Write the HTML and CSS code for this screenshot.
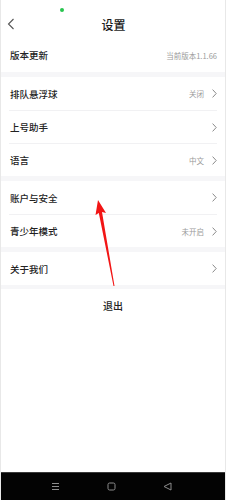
FILE: index.html
```html
<!DOCTYPE html>
<html lang="zh">
<head>
<meta charset="utf-8">
<title>设置</title>
<link rel="stylesheet" href="styles.css">
</head>
<body>
<div class="screen">
  <div class="top">
    <div class="status"><span class="dot"></span></div>
    <div class="titlebar">
      <svg class="back" width="8" height="12" viewBox="0 0 8 12"><path d="M6.5 1 L1.5 6 L6.5 11" fill="none" stroke="#555" stroke-width="1.1"/></svg>
      <div class="title">设置</div>
      <span></span>
    </div>
    <div class="row"><div class="row-body"><span class="label">版本更新</span><span class="value">当前版本1.1.66</span></div></div>
  </div>

  <div class="group">
    <div class="row"><div class="row-body"><span class="label">排队悬浮球</span><span class="right"><span class="value">关闭</span><svg class="chev" width="5" height="9" viewBox="0 0 5 9"><path d="M0.6 0.6 L4.2 4.5 L0.6 8.4" fill="none" stroke="#8a8a8a" stroke-width="1"/></svg></span></div></div>
    <div class="row"><div class="row-body"><span class="label">上号助手</span><span class="right"><svg class="chev" width="5" height="9" viewBox="0 0 5 9"><path d="M0.6 0.6 L4.2 4.5 L0.6 8.4" fill="none" stroke="#8a8a8a" stroke-width="1"/></svg></span></div></div>
    <div class="row"><div class="row-body"><span class="label">语言</span><span class="right"><span class="value">中文</span><svg class="chev" width="5" height="9" viewBox="0 0 5 9"><path d="M0.6 0.6 L4.2 4.5 L0.6 8.4" fill="none" stroke="#8a8a8a" stroke-width="1"/></svg></span></div></div>
  </div>

  <div class="group">
    <div class="row"><div class="row-body"><span class="label">账户与安全</span><span class="right"><svg class="chev" width="5" height="9" viewBox="0 0 5 9"><path d="M0.6 0.6 L4.2 4.5 L0.6 8.4" fill="none" stroke="#8a8a8a" stroke-width="1"/></svg></span></div></div>
    <div class="row"><div class="row-body"><span class="label">青少年模式</span><span class="right"><span class="value">未开启</span><svg class="chev" width="5" height="9" viewBox="0 0 5 9"><path d="M0.6 0.6 L4.2 4.5 L0.6 8.4" fill="none" stroke="#8a8a8a" stroke-width="1"/></svg></span></div></div>
  </div>

  <div class="group">
    <div class="row"><div class="row-body"><span class="label">关于我们</span><span class="right"><svg class="chev" width="5" height="9" viewBox="0 0 5 9"><path d="M0.6 0.6 L4.2 4.5 L0.6 8.4" fill="none" stroke="#8a8a8a" stroke-width="1"/></svg></span></div></div>
  </div>

  <div class="bottom">
    <div class="logout">退出</div>
  </div>

  <div class="navbar">
    <svg width="9" height="9" viewBox="0 0 9 9"><path d="M1 1.5 H8 M1 4.5 H8 M1 7.5 H8" stroke="#8c8c8c" stroke-width="1"/></svg>
    <svg width="9" height="9" viewBox="0 0 9 9"><rect x="1" y="1" width="7" height="7" rx="1.6" fill="none" stroke="#8c8c8c" stroke-width="1"/></svg>
    <svg width="9" height="9" viewBox="0 0 9 9"><path d="M1 4.5 L8 1 L8 8 Z" fill="none" stroke="#8c8c8c" stroke-width="1" stroke-linejoin="round"/></svg>
  </div>

  <svg class="arrow" width="226" height="500" viewBox="0 0 226 500">
    <polygon points="98,200 106,213 102,212 114.5,286 113.5,286 98.8,213 95.5,215" fill="#f21515"/>
  </svg>
</div>
</body>
</html>
```

FILE: styles.css
```css
* { box-sizing: border-box; }
html, body { margin: 0; padding: 0; }
body {
  font-family: "Noto Sans CJK SC", "Noto Sans", sans-serif;
  color: #222;
}
.screen {
  position: relative;
  width: 226px;
  height: 500px;
  display: flex;
  flex-direction: column;
  background: #f6f6f8;
  border-left: 1px solid #e8e8e8;
  border-right: 1px solid #e8e8e8;
  overflow: hidden;
}
.top { background: #fff; }
.status {
  height: 12px;
  padding-left: 59px;
  padding-top: 8px;
}
.dot {
  display: block;
  width: 4px;
  height: 4px;
  border-radius: 50%;
  background: #27c54f;
}
.titlebar {
  height: 26px;
  display: grid;
  grid-template-columns: 20px 1fr 20px;
  align-items: center;
  padding-left: 6px;
  padding-right: 6px;
}
.back { display: block; margin-top: -2px; }
.title {
  text-align: center;
  font-size: 12px;
  font-weight: 500;
  color: #1a1a1a;
  margin-top: -2px;
  margin-left: 1px;
}
.row {
  padding: 0 8px;
  background: #fff;
}
.row-body {
  height: 33px;
  display: flex;
  align-items: center;
  justify-content: space-between;
}
.top .row-body { height: 34px; }
.row + .row .row-body { border-top: 1px solid #f1f1f3; }
.label {
  font-size: 9.5px;
  font-weight: 500;
  color: #222;
  padding-left: 1px;
}
.value {
  font-size: 7.5px;
  color: #9a9a9a;
}
.right {
  display: flex;
  align-items: center;
  gap: 8px;
}
.chev { display: block; }
.group {
  margin-top: 5px;
  background: #fff;
}
.bottom {
  flex: 1;
  margin-top: 4px;
  background: #fff;
}
.logout {
  height: 32px;
  display: flex;
  align-items: center;
  justify-content: center;
  font-size: 10px;
  font-weight: 500;
  color: #222;
}
.navbar {
  height: 28px;
  background: #030303;
  border-top: 1px solid #3a3a3a;
  display: flex;
  align-items: center;
  justify-content: center;
  gap: 47px;
  padding-bottom: 1px;
  padding-right: 3px;
}
.navbar svg { display: block; }
.arrow {
  position: absolute;
  left: -1px;
  top: 0;
  pointer-events: none;
}
```
